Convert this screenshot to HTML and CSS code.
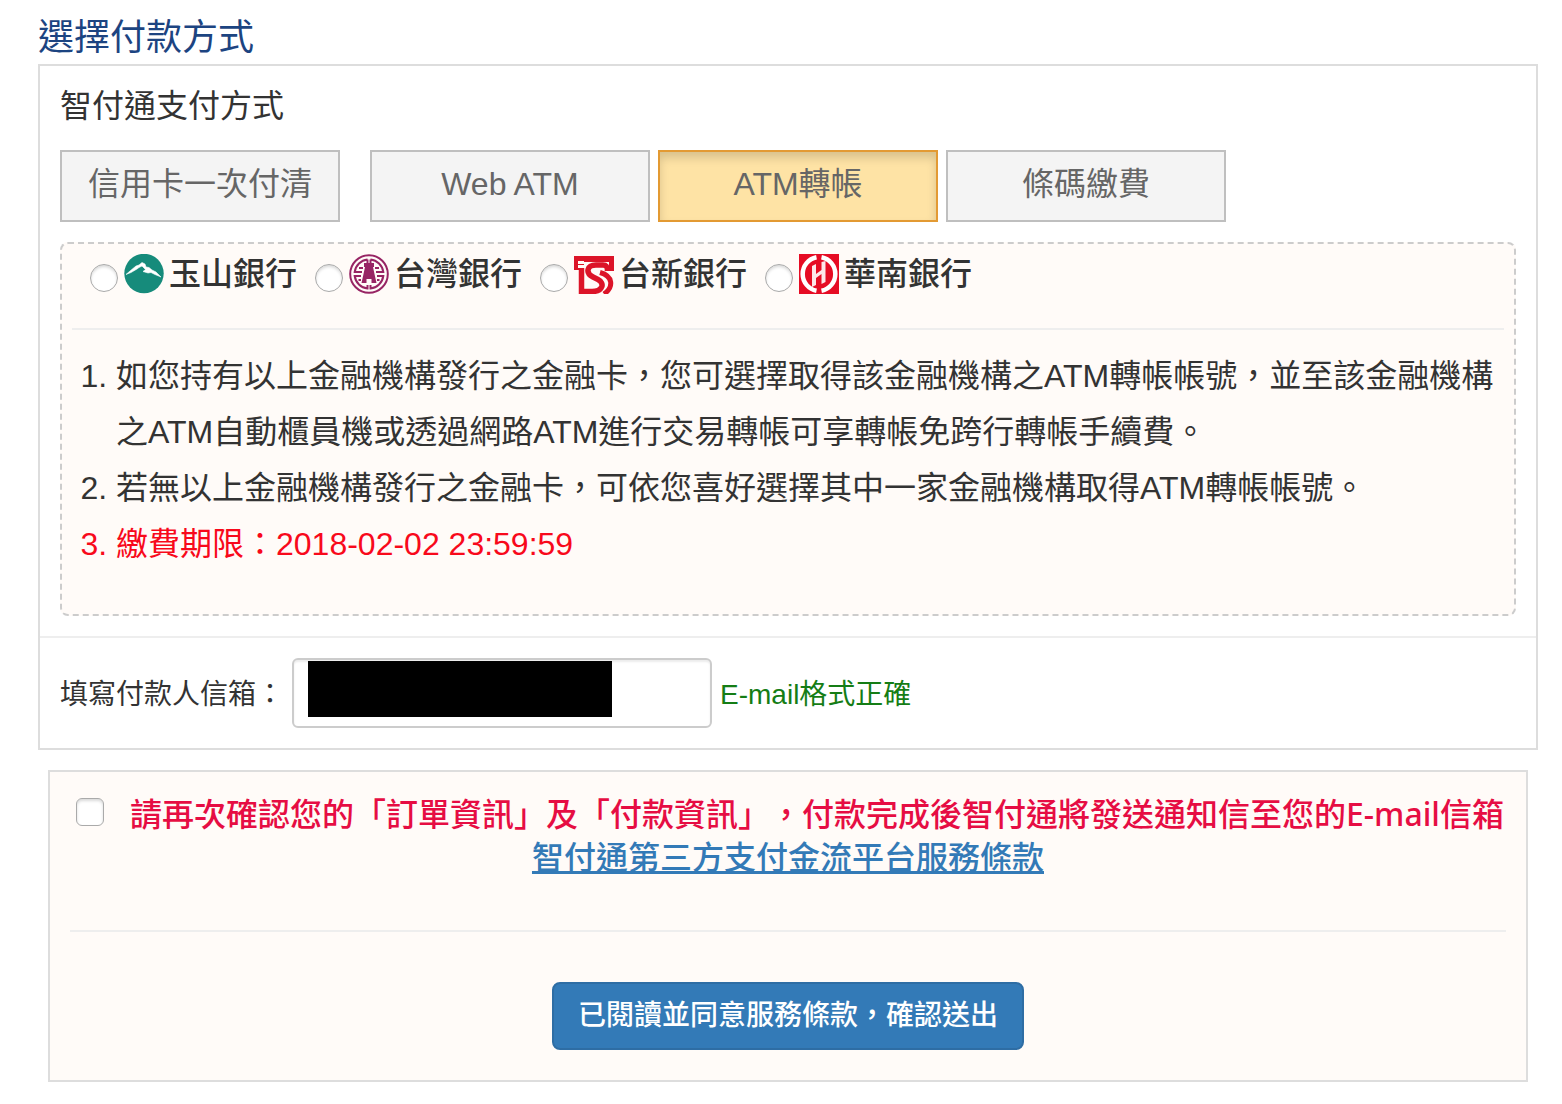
FILE: index.html
```html
<!DOCTYPE html>
<html lang="zh-Hant">
<head>
<meta charset="utf-8">
<meta name="viewport" content="width=device-width, initial-scale=1">
<title>選擇付款方式</title>
<link rel="stylesheet" href="styles.css">
</head>
<body>
<main class="page">
  <h1 class="page-title">選擇付款方式</h1>

  <form class="payment">
    <section class="panel">
      <div class="panel-body">
        <h2 class="panel-title">智付通支付方式</h2>
        <div class="methods">
          <button type="button" class="method method-first">信用卡一次付清</button>
          <button type="button" class="method">Web ATM</button>
          <button type="button" class="method method-active" aria-pressed="true">ATM轉帳</button>
          <button type="button" class="method">條碼繳費</button>
        </div>

        <div class="detail">
          <div class="banks">
            <label class="bank">
              <input type="radio" name="bank" class="radio">
              <svg class="logo" viewBox="0 0 40 40" aria-hidden="true">
                <circle cx="20" cy="19.500" r="19.700" fill="#168b7b"/>
                <path d="M2 20.500 L6 17 L12 12 L15 11 L18 8.500 L21 10 L22 13 L25 13.500 L28 16 L32 18 L37 23 L31 20.500 L27 18.500 L24 19 L19 17.500 L21.500 15.500 L18 12 L15 13.500 L13 15 L7 18.500 Z" fill="#fff" stroke="#fff" stroke-width=".6"/>
              </svg>
              <span>玉山銀行</span>
            </label>
            <label class="bank">
              <input type="radio" name="bank" class="radio">
              <svg class="logo" viewBox="0 0 40 40" aria-hidden="true">
                <g fill="none" stroke="#972464" stroke-width="2">
                  <circle cx="20" cy="20" r="18.800"/>
                  <path d="M18.500 5.500A14.500 14.500 0 0 0 5.700 18H13M21.500 5.500A14.500 14.500 0 0 1 34.300 18H27M12 22H5.700A14.500 14.500 0 0 0 18.500 34.500V31M28 22H34.300A14.500 14.500 0 0 1 21.500 34.500V31M18.500 5.500V9M21.500 5.500V9M10 14H14M30 14H26M9.500 26H12M30.500 26H28"/>
                </g>
                <path d="M15 9H25V13H24L25.500 20L27.500 29H22.500V25H17.500V29H12.500L14.500 20L16 13H15Z" fill="#972464"/>
              </svg>
              <span>台灣銀行</span>
            </label>
            <label class="bank">
              <input type="radio" name="bank" class="radio">
              <svg class="logo" viewBox="0 0 40 40" aria-hidden="true">
                <path d="M0 2H40V17H35V8H10V11H4V14H10V35H5V16H0Z" fill="#dc1428"/>
                <path d="M4 7H10V10H4Z" fill="#fffbf8"/>
                <g fill="none" stroke="#dc1428">
                  <path d="M7.500 14V37.500H18C29 37.500 31 29 24 25.500L19 23C11 19 13 11 22 11H29C32 11 33.500 12.500 33.500 17" stroke-width="5.500"/>
                  <path d="M26 18.500C39 22 40 33 30 40" stroke-width="5"/>
                </g>
              </svg>
              <span>台新銀行</span>
            </label>
            <label class="bank">
              <input type="radio" name="bank" class="radio">
              <svg class="logo" viewBox="0 0 40 40" aria-hidden="true">
                <rect width="40" height="40" fill="#e60c24"/>
                <path d="M17.500 3.300A17 17 0 0 0 17.500 36.700M22.500 3.300A17 17 0 0 1 22.500 36.700" fill="none" stroke="#fff" stroke-width="4.500"/>
                <path d="M13 12L17 10V20L22.500 16V8L26.500 7V28L22.500 30V20L17 24V31L13 33Z" fill="#fff" opacity=".9"/>
              </svg>
              <span>華南銀行</span>
            </label>
          </div>

          <ol class="notes">
            <li>如您持有以上金融機構發行之金融卡，您可選擇取得該金融機構之ATM轉帳帳號，並至該金融機構之ATM自動櫃員機或透過網路ATM進行交易轉帳可享轉帳免跨行轉帳手續費。</li>
            <li>若無以上金融機構發行之金融卡，可依您喜好選擇其中一家金融機構取得ATM轉帳帳號。</li>
            <li class="deadline">繳費期限：2018-02-02 23:59:59</li>
          </ol>
        </div>
      </div>

      <div class="payer">
        <label for="email">填寫付款人信箱：</label>
        <div class="email-field">
          <input type="email" id="email" class="email">
          <span class="redaction"></span>
        </div>
        <span class="valid">E-mail格式正確</span>
      </div>
    </section>

    <section class="confirm">
      <div class="agree">
        <input type="checkbox" id="agree" class="checkbox">
        <label for="agree" class="agree-text">請再次確認您的「訂單資訊」及「付款資訊」，付款完成後智付通將發送通知信至您的E-mail信箱</label>
      </div>
      <a class="terms" href="#terms">智付通第三方支付金流平台服務條款</a>
      <hr class="rule">
      <button type="submit" class="submit">已閱讀並同意服務條款，確認送出</button>
    </section>
  </form>
</main>
</body>
</html>
```
FILE: styles.css
```css
* {
  box-sizing: border-box;
}

body {
  margin: 0;
  background: #fff;
  color: #333;
  font-family: "Liberation Sans", "Noto Sans CJK TC", sans-serif;
  font-size: 32px;
  font-weight: 400;
  line-height: 44px;
  text-spacing-trim: space-all;
}

button,
input {
  font: inherit;
}

.page {
  padding: 12px 24px 22px 38px;
}

.page-title,
.panel-title {
  margin: 0;
  font-weight: 400;
}

.page-title {
  color: #1c4481;
  font-size: 36px;
  line-height: 52px;
}

.panel {
  border: 2px solid #ddd;
}

.panel-body {
  padding: 18px 20px 20px;
  border-bottom: 2px solid #eee;
}

.panel-title {
  font-size: 32px;
}

.methods {
  display: flex;
  gap: 8px;
  margin: 22px 0 20px;
}

.method {
  flex: 0 1 280px;
  height: 72px;
  padding: 0 0 4px;
  border: 2px solid #bfbfbf;
  background: #f4f4f4;
  color: #666;
}

.method-first {
  margin-right: 22px;
}

.method-active {
  border-color: #e39a33;
  background: #fee3a5;
  box-shadow: inset 0 6px 10px rgba(0, 0, 0, 0.15);
}

.detail {
  padding: 8px 10px 42px;
  border: 2px dashed #ccc;
  border-radius: 8px;
  background: #fffbf8;
}

.banks {
  display: flex;
  flex-wrap: wrap;
  gap: 18px;
  padding: 0 18px 32px;
  border-bottom: 2px solid #eee;
  font-weight: 500;
}

.bank {
  display: flex;
  align-items: center;
}

.logo {
  width: 40px;
  height: 40px;
  margin: 0 5px 0 6px;
}

.radio,
.checkbox {
  appearance: none;
  flex: none;
  width: 28px;
  height: 28px;
  margin: 0;
  border: 1px solid #aaa;
  background: #fff;
  box-shadow: inset 0 2px 3px rgba(0, 0, 0, 0.15);
}

.radio {
  margin-top: 8px;
  border-radius: 50%;
}

.checkbox {
  margin-bottom: 4px;
  border-radius: 6px;
}

.notes {
  margin: 18px 0 0;
  padding: 0 8px 0 44px;
  line-height: 56px;
}

.deadline {
  color: #f8091b;
}

.payer {
  display: flex;
  align-items: center;
  padding: 20px;
  font-size: 28px;
  line-height: 40px;
}

.payer > label,
.valid {
  padding-top: 3px;
}

.email-field {
  position: relative;
  flex: 0 1 420px;
  margin: 0 8px;
}

.email {
  display: block;
  width: 100%;
  height: 70px;
  padding: 0 16px;
  border: 2px solid #ccc;
  border-radius: 6px;
  background: #fff;
  box-shadow: inset 0 2px 2px rgba(0, 0, 0, 0.08);
}

.redaction {
  position: absolute;
  top: 3px;
  left: 16px;
  width: 304px;
  height: 56px;
  background: #000;
}

.valid {
  color: #157d15;
}

.confirm {
  display: flex;
  flex-direction: column;
  align-items: center;
  margin: 20px 10px 0;
  padding: 20px 20px 30px;
  border: 2px solid #ddd;
  background: #fffbf8;
  font-weight: 500;
}

.agree {
  display: flex;
  align-self: stretch;
  align-items: center;
  gap: 26px;
  padding-left: 6px;
}

.agree-text {
  color: #e60d43;
  font-family: "Noto Sans", "Noto Sans CJK TC", sans-serif;
}

.terms {
  color: #337ab7;
}

.rule {
  align-self: stretch;
  margin: 50px 0;
  border: 0;
  border-top: 2px solid #eee;
}

.submit {
  height: 68px;
  padding: 0 24px;
  border: 2px solid #2e6da4;
  border-radius: 8px;
  background: #337ab7;
  color: #fff;
  font-size: 28px;
}
```
